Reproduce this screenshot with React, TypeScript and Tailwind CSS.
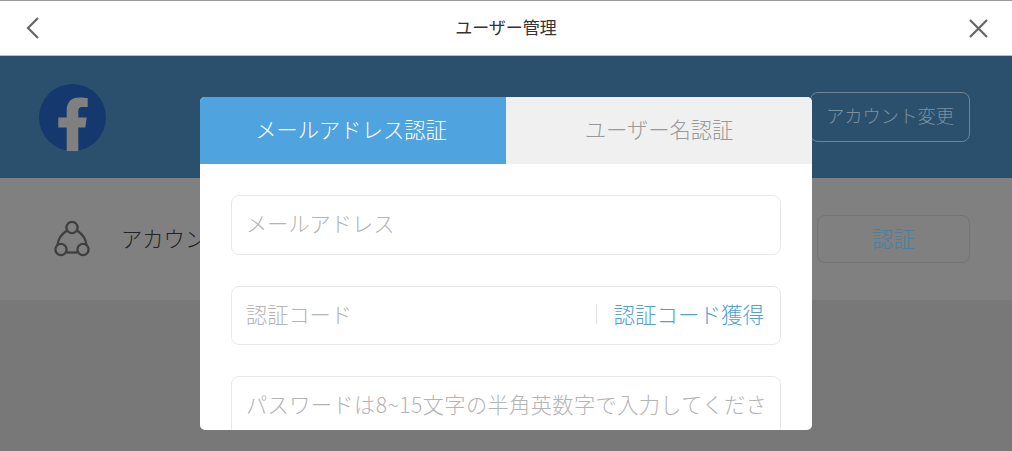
const font = { fontFamily: '"Noto Sans CJK JP", "Noto Sans", sans-serif' }

function FacebookLogo() {
  return (
    <svg width="67" height="67" viewBox="0 0 67 67">
      <circle cx="33.5" cy="33.5" r="33.5" fill="#15396f" />
      <path
        d="M27.7 67V43.4H19.3V33.4H27.7V26C27.7 17.5 33 13.4 40 13.4C44 13.4 47 13.7 48.7 14V23H43.5C40 23 39.3 24.8 39.3 27.5V33.4H47.7L46.3 43.4H39.3V67Z"
        fill="#808080"
      />
    </svg>
  )
}

function GroupIcon() {
  return (
    <svg width="36" height="38" viewBox="0 0 36 38" fill="none" stroke="#3f3f3f" strokeWidth="2.3">
      <circle cx="18" cy="7.5" r="5.6" />
      <circle cx="7" cy="29.5" r="5.6" />
      <circle cx="29" cy="29.5" r="5.6" />
      <path d="M13 10.5C8.5 13.5 4 18 3.5 25" />
      <path d="M23 10.5C27.5 13.5 32 18 32.5 25" />
      <path d="M12.5 32.5H23.5" />
    </svg>
  )
}

function Field({ placeholder, action, className }: { placeholder: string; action?: string; className: string }) {
  return (
    <div
      className={`flex h-[59.5px] shrink-0 items-center rounded-[8px] border border-[#e8e8e8] pb-[3px] pl-[14px] text-[21.2px] font-light ${className}`}
    >
      <span className="flex-1 overflow-hidden whitespace-nowrap text-[#b4b4b4]">{placeholder}</span>
      {action && (
        <>
          <span className="mr-4 h-5 w-px bg-[#e4e4e4]" />
          <span className="text-[21.5px] text-[#4f9fd8]">{action}</span>
        </>
      )}
    </div>
  )
}

export default function App() {
  return (
    <div className="relative flex h-[451px] w-[1012px] flex-col overflow-hidden bg-[#787878]" style={font}>
      <header className="flex h-[56px] shrink-0 items-center justify-between border-t border-b border-t-[#9a9a9a] border-b-[#b5c0c8] bg-white pl-[26px] pr-[24px]">
        <svg width="13" height="22" viewBox="0 0 13 22" fill="none" stroke="#666666" strokeWidth="2.2">
          <path d="M12 1L2 11L12 21" />
        </svg>
        <span className="ml-[4px] pb-[2px] text-[17px] text-[#333333]">ユーザー管理</span>
        <svg width="19" height="19" viewBox="0 0 19 19" fill="none" stroke="#666666" strokeWidth="2.2">
          <path d="M1 1L18 18M18 1L1 18" />
        </svg>
      </header>

      <section className="flex h-[122px] shrink-0 items-center justify-between bg-[#2a506d] pl-[39px] pr-[42px]">
        <FacebookLogo />
        <div className="mb-[1px] flex h-[50px] w-[160px] items-center justify-center rounded-[8px] border border-[#6f8496] pb-[2px] text-[18.3px] font-light text-[#7d909f]">
          アカウント変更
        </div>
      </section>

      <section className="flex h-[122px] shrink-0 items-center justify-between bg-[#808080] pl-[54px] pr-[42px]">
        <div className="flex items-center gap-[31px]">
          <GroupIcon />
          <span className="pb-[2px] text-[21.3px] font-light text-[#222222]">アカウント</span>
        </div>
        <div className="flex h-[48px] w-[153px] items-center justify-center rounded-[8px] border border-[#747474] pb-[2px] text-[21.3px] font-light text-[#4c7f9e]">
          認証
        </div>
      </section>

      <div className="absolute left-[200px] top-[97px] flex h-[333px] w-[612px] flex-col overflow-hidden rounded-[5px] bg-white">
        <div className="flex h-[67px] shrink-0 text-[21.3px] font-light">
          <div className="flex w-[306px] items-center justify-center bg-[#4fa3de] pb-[3px] pr-[4px] text-white">
            メールアドレス認証
          </div>
          <div className="flex flex-1 items-center justify-center bg-[#f0f0f0] pb-[3px] text-[#999999]">
            ユーザー名認証
          </div>
        </div>
        <div className="flex flex-col gap-[31px] px-[31px] pt-[31px]">
          <Field placeholder="メールアドレス" className="pr-[16px]" />
          <Field placeholder="認証コード" action="認証コード獲得" className="pr-[16px]" />
          <Field placeholder="パスワードは8~15文字の半角英数字で入力してください" className="pr-[12px] tracking-[0.42px]" />
        </div>
      </div>
    </div>
  )
}
